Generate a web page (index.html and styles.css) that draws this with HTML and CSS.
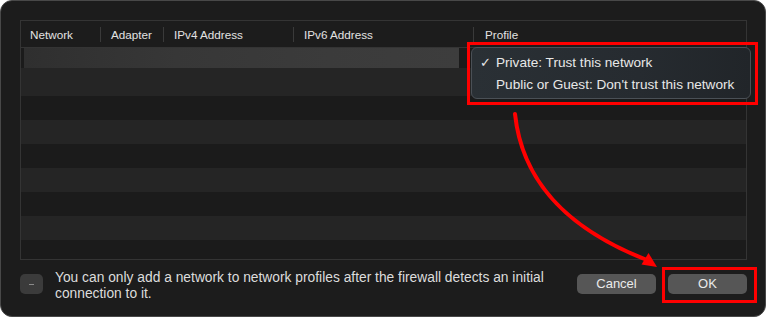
FILE: index.html
```html
<!DOCTYPE html>
<html>

<head>
  <title>Network Profiles</title>
  <meta charset="UTF-8">
  <link rel="stylesheet" href="styles.css">
</head>

<body>
  <div class="window">

    <div class="table">
      <div class="table_head">
        <div class="head_cell">Network</div>
        <div class="head_cell">Adapter</div>
        <div class="head_cell">IPv4 Address</div>
        <div class="head_cell">IPv6 Address</div>
        <div class="head_cell">Profile</div>
      </div>
      <div class="table_body">
        <div class="row row_first">
          <div class="blur_bar"></div>
        </div>
        <div class="row row_light row_tall"></div>
        <div class="row"></div>
        <div class="row row_light"></div>
        <div class="row"></div>
        <div class="row row_light"></div>
        <div class="row"></div>
        <div class="row row_light"></div>
        <div class="row row_last"></div>
      </div>
    </div>

    <div class="footer">
      <div class="minus_btn"><span></span></div>
      <p class="note">You can only add a network to network profiles after the firewall detects an initial connection to it.</p>
      <div class="buttons">
        <div class="btn">Cancel</div>
        <div class="btn">OK</div>
      </div>
    </div>

    <div class="menu">
      <div class="menu_item"><span class="check">✓</span>Private: Trust this network</div>
      <div class="menu_item"><span class="check"></span>Public or Guest: Don't trust this network</div>
    </div>

    <div class="mark mark_menu"></div>
    <div class="mark mark_ok"></div>

    <svg class="arrow" width="766" height="317" viewBox="0 0 766 317">
      <path d="M515,114 C522,180 565,228 647,260" fill="none" stroke="#ff0000" stroke-width="4" stroke-linecap="round" />
      <polygon points="657,267 641.5,264.5 648.5,253" fill="#ff0000" />
    </svg>

  </div>
</body>

</html>
```

FILE: styles.css
```css
html,
body {
  margin: 0;
  padding: 0;
  background-color: white;
}

body {
  font-family: "Liberation Sans", Arial, sans-serif;
  color: #dedede;
}

.window {
  position: relative;
  width: 766px;
  height: 317px;
  box-sizing: border-box;
  padding: 19px 18px 0 19px;
  background-color: #1c1c1c;
  border: 1px solid #484848;
  border-radius: 12px;
  overflow: hidden;
}

.table {
  width: 727px;
  height: 240px;
  box-sizing: border-box;
  border: 1px solid #343434;
  display: flex;
  flex-direction: column;
}

.table_head {
  height: 26px;
  flex-shrink: 0;
  display: grid;
  grid-template-columns: 79px 63px 130px 180px 1fr;
  align-items: center;
  border-bottom: 1px solid #343434;
  font-size: 11.7px;
  color: #e2e2e2;
}

.head_cell {
  height: 15px;
  line-height: 15px;
  padding-left: 10px;
  border-left: 1px solid #3a3a3a;
  white-space: nowrap;
}

.head_cell:first-child {
  border-left: none;
  padding-left: 9px;
}

.head_cell:last-child {
  padding-left: 11px;
}

.table_body {
  flex: 1;
  display: flex;
  flex-direction: column;
  overflow: hidden;
}

.row {
  height: 24px;
  flex-shrink: 0;
  background-color: #1b1b1b;
}

.row_light {
  background-color: #252525;
}

.row_first {
  height: 20px;
  padding-left: 3px;
}

.row_tall {
  height: 28px;
}

.row_last {
  height: 19px;
}

.blur_bar {
  width: 435px;
  height: 20px;
  background: linear-gradient(to right, #2f2f2f, #373737 35%, #3b3b3b 70%, #3d3d3d);
}

.footer {
  display: flex;
  align-items: flex-start;
  margin-top: 14px;
}

.minus_btn {
  width: 23px;
  height: 20px;
  border-radius: 5px;
  background-color: #3b3b3b;
  display: grid;
  place-content: center;
  flex-shrink: 0;
}

.minus_btn span {
  width: 5px;
  height: 1px;
  background-color: #8a8a8a;
}

.note {
  margin: -4px 0 0 12px;
  width: 496px;
  font-size: 13.8px;
  line-height: 16px;
  color: #dcdcdc;
}

.buttons {
  margin-left: auto;
  display: flex;
  gap: 12px;
}

.btn {
  width: 79px;
  height: 20px;
  line-height: 20px;
  border-radius: 5px;
  background-color: #565656;
  text-align: center;
  font-size: 13px;
  color: #eaeaea;
}

.menu {
  position: absolute;
  left: 470px;
  top: 46px;
  width: 280px;
  height: 52px;
  box-sizing: border-box;
  padding-top: 4px;
  background: linear-gradient(to right, #2a3035, #262b30 60%, #212529);
  border: 1px solid #4a5056;
  border-radius: 6px;
  font-size: 13.6px;
  color: #e8e8e8;
}

.menu_item {
  height: 22px;
  line-height: 22px;
  display: flex;
  white-space: nowrap;
}

.check {
  width: 16px;
  padding-left: 8px;
  font-size: 13px;
  flex-shrink: 0;
}

.mark {
  position: absolute;
  border: 3px solid #ff0000;
  box-sizing: border-box;
}

.mark_menu {
  left: 466px;
  top: 41px;
  width: 291px;
  height: 63px;
}

.mark_ok {
  left: 661px;
  top: 266px;
  width: 95px;
  height: 36px;
}

.arrow {
  position: absolute;
  left: -1px;
  top: -1px;
}
```
